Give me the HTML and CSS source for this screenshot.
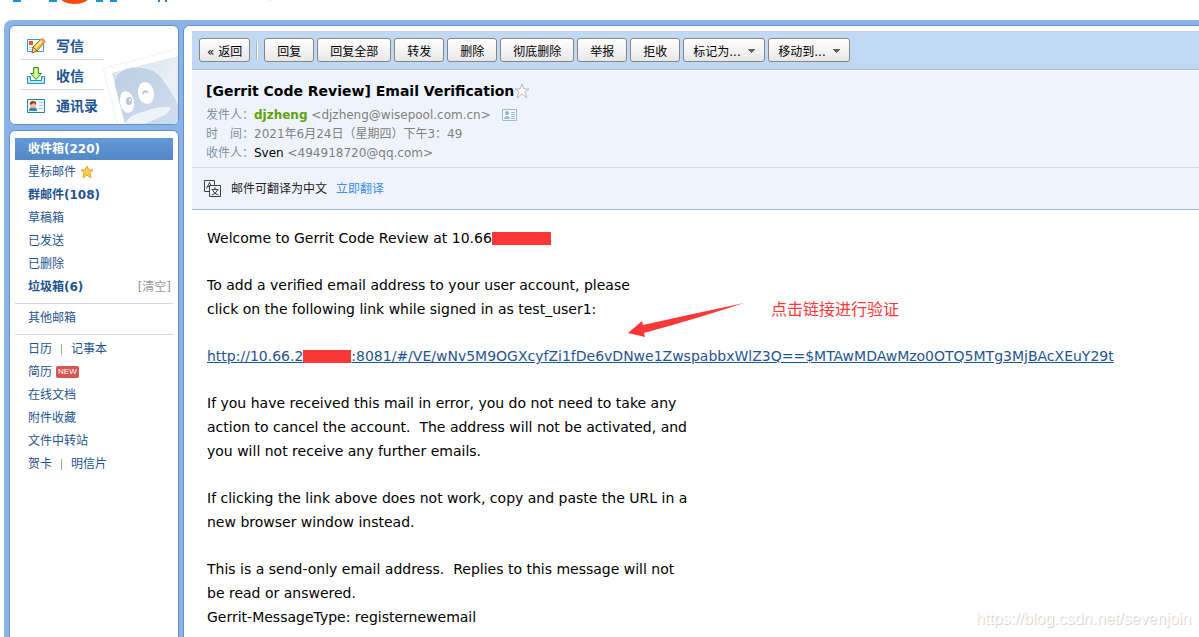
FILE: index.html
```html
<!DOCTYPE html>
<html lang="zh-CN">
<head>
<meta charset="utf-8">
<title>[Gerrit Code Review] Email Verification</title>
<link rel="stylesheet" href="styles.css">
</head>
<body>
<header class="masthead">
  <svg class="logo" width="300" height="5" viewBox="0 0 300 5" aria-hidden="true">
    <path fill="#1493dc" d="M13 0h8v2h-8zM49 0h8v2h-8zM96 0h7v2h-7zM110 0h7v2h-7z"/>
    <ellipse cx="74.500" cy="-4" rx="15" ry="8" fill="#f94a12"/>
    <path fill="#2b7ec0" d="M158 0h2v2h-2zM165 0h2v2h-2z"/>
    <path fill="#c3cdd9" d="M270 0h1v1h-1z"/>
  </svg>
</header>

<div class="frame">
  <aside class="sidebar">
    <nav class="card quick">
      <svg class="stamp" width="76" height="76" viewBox="0 0 76 76" aria-hidden="true">
        <defs>
          <linearGradient id="stampSky" x1="0" y1="0" x2="1" y2="1">
            <stop offset="0" stop-color="#cfdcec"/><stop offset=".6" stop-color="#e9eff7"/>
          </linearGradient>
          <linearGradient id="stampBird" x1="0" y1="0" x2="1" y2="1">
            <stop offset="0" stop-color="#bccee4"/><stop offset="1" stop-color="#d0ddec"/>
          </linearGradient>
        </defs>
        <path d="M3 22L76 2M3 22L17 76" fill="none" stroke="#e3e8ef" stroke-width="5" stroke-linecap="round" stroke-dasharray="0 6"/>
        <path d="M3 22L76 2M3 22L17 76" fill="none" stroke="#fff" stroke-width="4" stroke-linecap="round" stroke-dasharray="0 6"/>
        <path d="M3 22L76 2V76H17Z" fill="#fff"/>
        <path d="M10 25L76 8V76H23Z" fill="url(#stampSky)"/>
        <path d="M13 37Q13 20 36 19Q52 19 60 30Q72 44 76 57V76H23Z" fill="url(#stampBird)"/>
        <path d="M13 27Q24 18 38 19Q53 20 61 31Q71 45 76 56" fill="none" stroke="#edf2f8"/>
        <ellipse cx="25" cy="54" rx="7" ry="11" fill="#fff" transform="rotate(-12 25 54)"/>
        <ellipse cx="44" cy="45" rx="8" ry="11" fill="#fff" transform="rotate(-12 44 45)"/>
        <ellipse cx="27" cy="53" rx="3" ry="4" fill="#b3c6de"/>
        <circle cx="28" cy="52" r="1" fill="#fff"/>
        <path d="M41 46Q42 41 46 45" fill="none" stroke="#b3c6de" stroke-width="2"/>
        <path d="M22 76Q28 66 44 63Q58 58 69 59Q68 66 54 71Q46 74 42 76Z" fill="#eef3f9"/>
      </svg>
      <a class="quick-link" href="#compose">
        <svg width="20" height="18" viewBox="0 0 20 18" aria-hidden="true">
          <path d="M1.500 2.500h16v12h-16z" fill="#fff" stroke="#2f9bd0"/>
          <path d="M3 4h4v4H3z" fill="#f0532c"/>
          <path d="M3 10.500h4M3 12.500h3" stroke="#b9d9ee"/>
          <path d="M7 10L15 2Q18 1 19 5L11 14Z" fill="#ffb92b" stroke="#c47814"/>
          <path d="M14 3Q16 1 18 2L20 5L17 7Z" fill="#f2976a"/>
          <path d="M9 11L16 4" stroke="#fff1a4" stroke-width="2"/>
          <path d="M7 10L11 14L6 16Z" fill="#ecd6ae" stroke="#8c5a1d"/>
        </svg><span>写信</span></a>
      <a class="quick-link" href="#receive">
        <svg width="20" height="18" viewBox="0 0 20 18" aria-hidden="true">
          <path d="M1.500 9.500h3v4h11v-4h3v7h-17z" fill="#bce8fa" stroke="#2591c4"/>
          <path d="M7.500.5h5v6h3L10 12.500L4.500 6.500h3z" fill="#b3eb76" stroke="#429a23"/>
          <path d="M10 2v8" stroke="#e4ffb8" stroke-width="2"/>
        </svg><span>收信</span></a>
      <a class="quick-link" href="#contacts">
        <svg width="20" height="18" viewBox="0 0 20 18" aria-hidden="true">
          <path d="M1.500 2.500h17v13h-17z" fill="#eef8fe" stroke="#297eaf"/>
          <path d="M3 14Q3 10 7 10Q11 10 11 14Z" fill="#2f83c4"/>
          <circle cx="7" cy="8" r="3" fill="#f8ba87"/>
          <path d="M4 8Q3 4 7 4Q11 4 10 8L8 6Z" fill="#8d451f"/>
          <path d="M13 5.500h4M13 8.500h4M13 11.500h4" stroke="#9bc8e8"/>
        </svg><span>通讯录</span></a>
    </nav>

    <nav class="card folders">
      <ul class="list">
        <li><a class="row selected" href="#inbox">收件箱(220)</a></li>
        <li><a class="row" href="#starred">星标邮件
          <svg width="14" height="14" viewBox="0 0 14 14" aria-hidden="true"><path d="M7 1L9 5L13 5L10 8L11 13L7 10L3 13L4 8L1 5L5 5Z" fill="#ffcd47" stroke="#e8a33d"/></svg></a></li>
        <li><a class="row unread" href="#groups">群邮件(108)</a></li>
        <li><a class="row" href="#drafts">草稿箱</a></li>
        <li><a class="row" href="#sent">已发送</a></li>
        <li><a class="row" href="#deleted">已删除</a></li>
        <li class="split"><a class="row unread" href="#spam">垃圾箱(6)</a><a class="clear" href="#clear">[清空]</a></li>
      </ul>
      <hr class="rule">
      <ul class="list">
        <li><a class="row" href="#other">其他邮箱</a></li>
      </ul>
      <hr class="rule">
      <ul class="list">
        <li class="pair"><a class="row" href="#calendar">日历</a><i class="bar"></i><a href="#notes">记事本</a></li>
        <li><a class="row" href="#resume">简历 <span class="badge">NEW</span></a></li>
        <li><a class="row" href="#docs">在线文档</a></li>
        <li><a class="row" href="#attachments">附件收藏</a></li>
        <li><a class="row" href="#transfer">文件中转站</a></li>
        <li class="pair"><a class="row" href="#cards">贺卡</a><i class="bar"></i><a href="#postcards">明信片</a></li>
      </ul>
    </nav>
  </aside>

  <main class="reader">
    <div class="toolbar">
      <button class="btn back" type="button">« 返回</button>
      <i class="divider"></i>
      <button class="btn" type="button">回复</button>
      <button class="btn" type="button">回复全部</button>
      <button class="btn" type="button">转发</button>
      <button class="btn" type="button">删除</button>
      <button class="btn" type="button">彻底删除</button>
      <button class="btn" type="button">举报</button>
      <button class="btn" type="button">拒收</button>
      <select class="btn drop" aria-label="标记为"><option>标记为...</option></select>
      <select class="btn drop" aria-label="移动到"><option>移动到...</option></select>
    </div>

    <section class="mail-head">
      <h1 class="subject">[Gerrit Code Review] Email Verification
        <svg width="16" height="16" viewBox="0 0 16 16" aria-hidden="true"><path d="M8 1L10 6H15L11 9L13 15L8 11L3 15L5 9L1 6H6Z" fill="#fff" stroke="#b4b8bd"/></svg></h1>
      <dl class="meta">
        <div><dt>发件人：</dt><dd><b class="sender">djzheng</b> &lt;djzheng@wisepool.com.cn&gt;
          <svg class="vcard" width="16" height="12" viewBox="0 0 16 12" aria-hidden="true"><path d="M.5.5h14v11H.5z" fill="#f3f8fe" stroke="#9dbbdc"/><circle cx="5" cy="4" r="2" fill="#8fb1d5"/><path d="M2 9Q5 5 8 9v1H2zM9 3h4v1H9zM9 5h4v1H9zM9 7h4v1H9zM9 9h4v1H9z" fill="#9dbbdc"/></svg></dd></div>
        <div><dt>时　间：</dt><dd>2021年6月24日（星期四）下午3：49</dd></div>
        <div><dt>收件人：</dt><dd><span class="name">Sven</span> &lt;494918720@qq.com&gt;</dd></div>
      </dl>
    </section>

    <div class="translate">
      <svg width="18" height="18" viewBox="0 0 18 18" fill="none" stroke="#3c4046" aria-hidden="true">
        <path d="M5.500 11.500h-5V.5h10v5"/><path d="M2.500 8.500L5.500 2.500L7 5.500M4 6.500h2"/>
        <path d="M5.500 5.500h11v11h-11z" fill="#f5f8fc"/>
        <path d="M11 7v2M7.500 9.500h7M8.500 10Q10 14 14.500 15M13.500 10Q12 14 7.500 15"/>
      </svg>
      <span>邮件可翻译为中文</span>
      <a class="now" href="#translate">立即翻译</a>
    </div>

    <article class="message">
      <p>Welcome to Gerrit Code Review at 10.66<span class="redact wide"></span></p>
      <p>To add a verified email address to your user account, please<br>click on the following link while signed in as test_user1:</p>
      <p><a class="verify" href="#verify">http://10.66.2<span class="redact"></span>:8081/#/VE/wNv5M9OGXcyfZi1fDe6vDNwe1ZwspabbxWlZ3Q==$MTAwMDAwMzo0OTQ5MTg3MjBAcXEuY29t</a></p>
      <p>If you have received this mail in error, you do not need to take any<br>action to cancel the account.&nbsp; The address will not be activated, and<br>you will not receive any further emails.</p>
      <p>If clicking the link above does not work, copy and paste the URL in a<br>new browser window instead.</p>
      <p>This is a send-only email address.&nbsp; Replies to this message will not<br>be read or answered.<br>Gerrit-MessageType: registernewemail</p>
      <div class="note">
        <svg width="118" height="36" viewBox="0 0 118 36" aria-hidden="true"><path d="M1 31L15 19L16 23Q65 12 117 1Q65 18 17 31L18 35Z" fill="#fb3838"/></svg>
        <span>点击链接进行验证</span>
      </div>
    </article>
  </main>
</div>
<div class="watermark">https://blog.csdn.net/sevenjoin</div>
</body>
</html>
```

FILE: styles.css
```css
* { box-sizing: border-box; }

body {
  margin: 0;
  min-height: 100vh;
  display: flex;
  flex-direction: column;
  position: relative;
  background: #fff;
  color: #000;
  font: 12px/20px "DejaVu Sans", "Noto Sans CJK SC", sans-serif;
}

a { color: #1e5494; text-decoration: none; }

.masthead { height: 20px; }
.logo { display: block; }

.frame {
  flex: 1;
  display: flex;
  gap: 4px;
  margin-left: 4px;
  padding: 5px 0 0 5px;
  background: #8ab4e8;
  border-top-left-radius: 8px;
}

/* Sidebar */
.sidebar {
  flex: 0 0 170px;
  display: flex;
  flex-direction: column;
  gap: 5px;
}
.card {
  background: #fff;
  border: 1px solid #6391cf;
  border-radius: 6px;
}
.quick {
  position: relative;
  height: 100px;
  padding: 5px 10px;
  overflow: hidden;
}
.stamp { position: absolute; right: 0; bottom: 0; }
.quick-link {
  position: relative;
  display: flex;
  align-items: center;
  gap: 10px;
  height: 30px;
  padding-left: 6px;
  font-size: 14px;
  font-weight: bold;
}
.quick-link + .quick-link::before {
  content: "";
  position: absolute;
  left: 0;
  top: -2px;
  width: 84px;
  height: 1px;
  background: #d3dde9;
}

.folders {
  flex: 1;
  padding: 7px 5px 0;
  border-bottom: 0;
  border-radius: 6px 6px 0 0;
}
.list {
  display: flex;
  flex-direction: column;
  gap: 1px;
  margin: 0;
  padding: 0;
  list-style: none;
}
.row {
  display: flex;
  align-items: center;
  gap: 4px;
  height: 22px;
  padding-left: 13px;
}
.selected {
  background: linear-gradient(#6399d9, #5288c6);
  color: #fff;
  font-weight: bold;
}
.unread { font-weight: bold; }
.split { display: flex; justify-content: space-between; align-items: center; }
.clear { padding-right: 2px; color: #999; }
.pair { display: flex; align-items: center; }
.bar { width: 1px; height: 11px; margin: 0 9px; background: #8fb98f; }
.badge {
  padding: 0 2px;
  border-radius: 2px;
  background: #d75454;
  color: #fff;
  font: 8px/12px "Liberation Sans", sans-serif;
}
.rule {
  height: 1px;
  margin: 5px 0 3px;
  border: 0;
  background: #d2dae6;
}

/* Reading pane */
.reader {
  flex: 1;
  min-width: 0;
  padding: 5px 0 0 8px;
  background: #fff;
  border: 1px solid #6391cf;
  border-width: 1px 0 0 1px;
  border-top-left-radius: 6px;
}
.toolbar {
  display: flex;
  gap: 3px;
  height: 39px;
  padding: 7px;
  background: #c1d8f2;
  border-bottom: 1px solid #a4bdd9;
}
.btn {
  height: 24px;
  margin: 0;
  padding: 3px 12px 0;
  border: 1px solid #868686;
  border-radius: 3px;
  background: linear-gradient(#fff, #e8e8e8);
  color: #000;
  font: 12px/20px "DejaVu Sans", "Noto Sans CJK SC", sans-serif;
}
.back { padding: 3px 7px 0; }
.divider {
  width: 2px;
  height: 18px;
  margin: 3px 3px 0;
  background: #a8b5c3;
  border-right: 1px solid #fff;
}
.drop {
  appearance: none;
  width: 82px;
  padding: 3px 9px 0;
  background:
    linear-gradient(to bottom right, #606060 50%, transparent 50%) 68px 10px / 4px 4px no-repeat,
    linear-gradient(to bottom left, #606060 50%, transparent 50%) 64px 10px / 4px 4px no-repeat,
    linear-gradient(#fff, #e8e8e8);
}

.mail-head {
  margin-top: 1px;
  padding: 10px 14px 4px;
  background: #eff4fc;
  border-bottom: 1px solid #d0d9e3;
}
.subject {
  display: flex;
  align-items: center;
  gap: 0;
  margin: 0 0 5px;
  font-size: 14px;
  line-height: 20px;
}
.meta { margin: 0; color: #7f7f7f; line-height: 19px; }
.meta div { display: flex; }
.meta dt { width: 48px; color: #8090a0; }
.meta dd { margin: 0; }
.sender { color: #5fa207; }
.name { color: #000; }
.vcard { margin-left: 7px; vertical-align: -2px; }

.translate {
  display: flex;
  align-items: center;
  gap: 9px;
  height: 42px;
  padding-left: 12px;
  background: #eff4fc;
  border-bottom: 1px solid #a4bdd9;
  color: #222;
}
.now { color: #3f8ee8; }

.message {
  position: relative;
  padding: 16px 15px 7px;
  font-size: 14px;
  line-height: 24px;
}
.message p { margin: 0 0 23px; }
.message p:last-of-type { margin: 0; }
.verify { text-decoration: underline; }
.redact {
  display: inline-block;
  width: 48px;
  height: 13px;
  background: #fb3838;
  vertical-align: -2px;
}
.wide { width: 59px; }
.note {
  position: absolute;
  left: 435px;
  top: 92px;
  display: flex;
  gap: 26px;
  color: #fb3838;
  font: 16px/12px "Noto Sans CJK SC", sans-serif;
}

.watermark {
  position: absolute;
  right: 8px;
  bottom: 8px;
  color: #fff;
  font: 16px/20px "Liberation Sans", sans-serif;
  text-shadow: 1px 1px 1px #ccc;
}
```
